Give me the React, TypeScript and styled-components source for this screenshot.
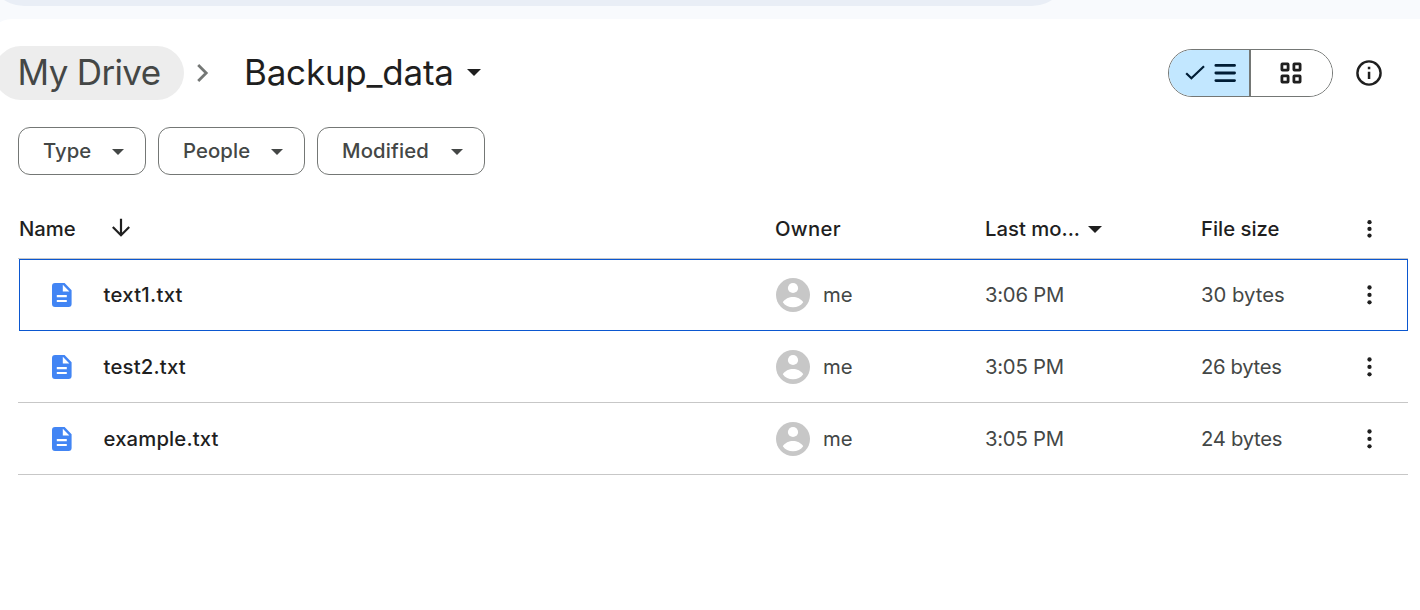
import React from "react";
import styled, { createGlobalStyle } from "styled-components";

const GlobalStyle = createGlobalStyle`
  * { box-sizing: border-box; }
  body {
    margin: 0;
    overflow: hidden;
    background: #f8fafd;
    color: #1f1f1f;
    font-family: Inter, Roboto, sans-serif;
  }
`;

const Page = styled.div`
  display: flex;
  flex-direction: column;
  width: 1420px;
  height: 610px;
`;

const TopBar = styled.div`
  display: flex;
  flex: none;
  align-items: flex-start;
  height: 18px;
  margin: 0 0 1px -12px;
`;

const SearchField = styled.div`
  width: 1080px;
  height: 72px;
  margin-top: -66px;
  border-radius: 36px;
  background: #e9eef6;
`;

const Panel = styled.main`
  flex: 1;
  margin-left: -12px;
  padding: 27px 0 0 30px;
  border-top-left-radius: 24px;
  background: #fff;
`;

const Header = styled.header`
  display: flex;
  align-items: center;
  height: 54px;
  margin-right: 38px;
`;

interface TextProps {
  $track?: number;
}

const RootCrumb = styled.button`
  width: 190px;
  height: 54px;
  margin: 0 0 0 -24px;
  padding: 0 0 2px 23.5px;
  border: 0;
  border-radius: 27px;
  background: #ededed;
  color: #444746;
  font: 400 35px/52px Inter, Roboto, sans-serif;
  letter-spacing: -0.65px;
  text-align: left;
  white-space: nowrap;
`;

const CrumbArrow = styled.svg`
  flex: none;
  margin: 0 35px 0 12px;
`;

const CurrentCrumb = styled.h1`
  display: flex;
  align-items: center;
  gap: 13px;
  margin: 0;
  padding-bottom: 2px;
  font-weight: 400;
  font-size: 35px;
  line-height: 52px;
  letter-spacing: -0.22px;
`;

const Triangle = styled.span<{ $size: number; $color?: string }>`
  flex: none;
  width: 0;
  height: 0;
  margin-top: 1px;
  border: ${(p) => p.$size}px solid transparent;
  border-bottom-width: 0;
  border-top-color: ${(p) => p.$color || "#1f1f1f"};
`;

const ViewSwitch = styled.div`
  display: flex;
  width: 165px;
  height: 48px;
  margin-left: auto;
  border: 1px solid #747775;
  border-radius: 24px;
  overflow: hidden;
`;

const ViewOption = styled.button<{ $active?: boolean }>`
  display: flex;
  flex: ${(p) => (p.$active ? "0 0 82px" : "1")};
  align-items: center;
  justify-content: center;
  padding: ${(p) => (p.$active ? "0 0 0 1px" : "0 2px 0 0")};
  border: 0;
  border-right: ${(p) => (p.$active ? "2px solid #747775" : "0")};
  background: ${(p) => (p.$active ? "#c2e7ff" : "#fff")};
  color: ${(p) => (p.$active ? "#001d35" : "#1f1f1f")};
`;

const InfoButton = styled.button`
  display: flex;
  margin-left: 23px;
  padding: 0;
  border: 0;
  background: none;
  color: #1f1f1f;
`;

const Filters = styled.div`
  display: flex;
  gap: 12px;
  margin-top: 27px;
`;

const Chip = styled.button<TextProps & { $width: number }>`
  display: flex;
  align-items: center;
  justify-content: space-between;
  width: ${(p) => p.$width}px;
  height: 48px;
  padding: 0 21px 0 24px;
  border: 1px solid #747775;
  border-radius: 12px;
  background: #fff;
  color: #444746;
  font: 500 20.3px/46px Inter, Roboto, sans-serif;
  letter-spacing: ${(p) => p.$track || 0}px;
`;

const Table = styled.section`
  width: 1390px;
  margin-top: 24px;
`;

const Row = styled.div<{ $focused?: boolean }>`
  display: grid;
  grid-template-columns: 757px 210px 216px 156px 1fr;
  align-items: center;
  height: 72px;
  border-bottom: 1px solid #c7c7c7;
  ${(p) =>
    p.$focused &&
    `
    position: relative;
    border-bottom-color: transparent;
    &::after {
      content: "";
      position: absolute;
      inset: 0 0 -1px 1px;
      border: 1px solid #0b57d0;
    }
  `}
`;

const HeadRow = styled(Row)`
  height: 60px;
  font-weight: 500;
`;

const Cell = styled.div<TextProps & { $strong?: boolean }>`
  display: flex;
  align-items: center;
  font-size: 20.3px;
  line-height: 28px;
  font-weight: ${(p) => (p.$strong ? 500 : 400)};
  color: ${(p) => (p.$strong ? "#1f1f1f" : "#444746")};
  letter-spacing: ${(p) => p.$track || 0}px;
  white-space: nowrap;
`;

const NameCell = styled(Cell)`
  padding-left: 1px;
`;

const OwnerCell = styled(Cell)`
  padding-left: 1px;
`;

const LastModified = styled(Cell)`
  gap: 8px;
`;

const SortArrow = styled.svg`
  margin: 0 0 2px 35.5px;
`;

const FileIcon = styled.svg`
  margin: 0 31.5px 0 33px;
`;

const Avatar = styled.svg`
  margin-right: 13px;
`;

const FileGlyph = () => (
  <FileIcon width="20" height="24" viewBox="0 0 20 24">
    <path
      fill="#4285f4"
      fillRule="evenodd"
      d="M3 0H12.6L19.6 7.2V21a3 3 0 0 1-3 3H3a3 3 0 0 1-3-3V3a3 3 0 0 1 3-3ZM10.8 1.8V8.4H17.4ZM4.8 12V14.2H14.8V12ZM4.8 16.9V19.1H14.8V16.9Z"
    />
  </FileIcon>
);

const AvatarGlyph = () => (
  <Avatar width="34" height="34" viewBox="0 0 34 34">
    <circle cx="17" cy="17" r="17" fill="#c7c7c7" />
    <circle cx="17" cy="10" r="5.1" fill="#fff" />
    <path fill="#fff" d="M6.8 24.2C8.7 20.8 13.2 18.9 17 18.9S25.3 20.8 27.2 24.2C25 27.4 21.3 29.2 17 29.2S9 27.4 6.8 24.2Z" />
  </Avatar>
);

const Kebab = ({ gap }: { gap: number }) => (
  <svg width="24" height="25" viewBox="0 0 24 25" fill="#1f1f1f">
    <circle cx="12.5" cy={12.9 - gap} r="2.15" />
    <circle cx="12.5" cy="12.9" r="2.15" />
    <circle cx="12.5" cy={12.9 + gap} r="2.15" />
  </svg>
);

const chips = [
  { label: "Type", width: 128, track: 0 },
  { label: "People", width: 147, track: 0.1 },
  { label: "Modified", width: 168, track: 0.15 },
];

const files = [
  { name: "text1.txt", track: 0.28, time: "3:06 PM", size: "30 bytes", sizeTrack: 0 },
  { name: "test2.txt", track: 0.2, time: "3:05 PM", size: "26 bytes", sizeTrack: -0.35 },
  { name: "example.txt", track: 0.15, time: "3:05 PM", size: "24 bytes", sizeTrack: -0.3 },
];

export default function App() {
  return (
    <>
      <GlobalStyle />
      <Page>
        <TopBar>
          <SearchField />
        </TopBar>
        <Panel>
          <Header>
            <RootCrumb>My Drive</RootCrumb>
            <CrumbArrow width="13" height="20" viewBox="0 0 13 20">
              <path d="M2.2 2 10.2 10 2.2 18" fill="none" stroke="#747775" strokeWidth="2.8" />
            </CrumbArrow>
            <CurrentCrumb>
              Backup_data
              <Triangle $size={7.5} />
            </CurrentCrumb>
            <ViewSwitch>
              <ViewOption $active aria-label="List view">
                <svg width="54" height="24" viewBox="0 0 54 24" fill="none" stroke="currentColor">
                  <path d="M3.2 12.2 8.4 17.2 21 5.2" strokeWidth="2.2" />
                  <path d="M32.9 4.4H51.5M32.9 12H51.5M32.9 19.6H51.5" strokeWidth="2.9" strokeLinecap="round" />
                </svg>
              </ViewOption>
              <ViewOption aria-label="Grid view">
                <svg width="22" height="22" viewBox="0 0 22 22" fill="none" stroke="currentColor" strokeWidth="2.8">
                  <rect x="1.9" y="1.9" width="6.2" height="6.2" rx="0.5" />
                  <rect x="13.9" y="1.9" width="6.2" height="6.2" rx="0.5" />
                  <rect x="1.9" y="13.9" width="6.2" height="6.2" rx="0.5" />
                  <rect x="13.9" y="13.9" width="6.2" height="6.2" rx="0.5" />
                </svg>
              </ViewOption>
            </ViewSwitch>
            <InfoButton aria-label="View details">
              <svg width="26" height="26" viewBox="0 0 26 26">
                <circle cx="13" cy="13" r="11.6" fill="none" stroke="currentColor" strokeWidth="2.4" />
                <path d="M11.8 6.7h2.5v2.5h-2.5zM11.8 11.7h2.5v7.4h-2.5z" fill="currentColor" />
              </svg>
            </InfoButton>
          </Header>
          <Filters>
            {chips.map((c) => (
              <Chip key={c.label} $width={c.width} $track={c.track}>
                {c.label}
                <Triangle $size={6} $color="#444746" />
              </Chip>
            ))}
          </Filters>
          <Table>
            <HeadRow>
              <NameCell $strong>
                Name
                <SortArrow width="20" height="20" viewBox="0 0 20 20" fill="none" stroke="#1f1f1f" strokeWidth="2.2">
                  <path d="M10 0.8V16.8M1.8 9 10 17.2 18.2 9" />
                </SortArrow>
              </NameCell>
              <Cell $strong $track={0.3}>Owner</Cell>
              <LastModified $strong>
                Last mo...
                <Triangle $size={7.5} />
              </LastModified>
              <Cell $strong>File size</Cell>
              <Kebab gap={6.7} />
            </HeadRow>
            {files.map((f, i) => (
              <Row key={f.name} $focused={i === 0}>
                <NameCell $strong $track={f.track}>
                  <FileGlyph />
                  {f.name}
                </NameCell>
                <OwnerCell>
                  <AvatarGlyph />
                  me
                </OwnerCell>
                <Cell $track={-0.25}>{f.time}</Cell>
                <Cell $track={f.sizeTrack}>{f.size}</Cell>
                <Kebab gap={7.4} />
              </Row>
            ))}
          </Table>
        </Panel>
      </Page>
    </>
  );
}
